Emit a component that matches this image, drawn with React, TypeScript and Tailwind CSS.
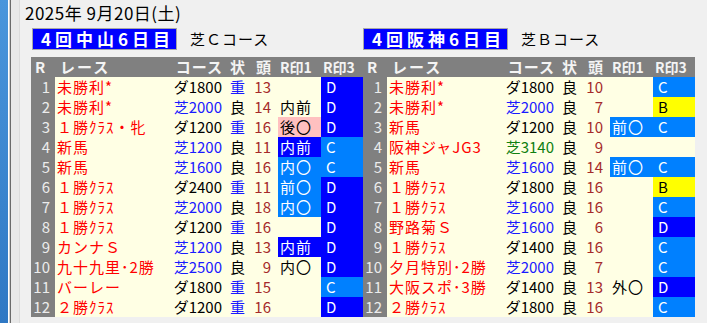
import React from "react"

type Mark = { t: string; c: "blue" | "sky" | "pink" | "yellow" | "plain" } | null

type Row = {
  race: string
  course: string
  courseColor: "dirt" | "turf" | "jump"
  cond: "重" | "良"
  heads: number
  m1: Mark
  m3: Mark
}

const markBg: Record<string, string> = {
  blue: "bg-[#0000ff] text-white",
  sky: "bg-[#0080ff] text-white",
  pink: "bg-[#ffc0c0] text-black",
  yellow: "bg-[#ffff00] text-black",
  plain: "text-black",
}

const courseText: Record<string, string> = {
  dirt: "text-black",
  turf: "text-[#1a1aff]",
  jump: "text-[#108010]",
}

const D: Mark = { t: "D", c: "blue" }
const C: Mark = { t: "C", c: "sky" }
const B: Mark = { t: "B", c: "yellow" }

const nakayama: Row[] = [
  { race: "未勝利*", course: "ダ1800", courseColor: "dirt", cond: "重", heads: 13, m1: null, m3: D },
  { race: "未勝利*", course: "芝2000", courseColor: "turf", cond: "良", heads: 14, m1: { t: "内前", c: "plain" }, m3: D },
  { race: "１勝ｸﾗｽ・牝", course: "ダ1200", courseColor: "dirt", cond: "重", heads: 16, m1: { t: "後〇", c: "pink" }, m3: D },
  { race: "新馬", course: "芝1200", courseColor: "turf", cond: "良", heads: 11, m1: { t: "内前", c: "blue" }, m3: C },
  { race: "新馬", course: "芝1600", courseColor: "turf", cond: "良", heads: 16, m1: { t: "内〇", c: "sky" }, m3: C },
  { race: "１勝ｸﾗｽ", course: "ダ2400", courseColor: "dirt", cond: "重", heads: 11, m1: { t: "前〇", c: "sky" }, m3: D },
  { race: "１勝ｸﾗｽ", course: "芝2000", courseColor: "turf", cond: "良", heads: 18, m1: { t: "内〇", c: "sky" }, m3: D },
  { race: "１勝ｸﾗｽ", course: "ダ1200", courseColor: "dirt", cond: "重", heads: 16, m1: null, m3: D },
  { race: "カンナＳ", course: "芝1200", courseColor: "turf", cond: "良", heads: 13, m1: { t: "内前", c: "blue" }, m3: D },
  { race: "九十九里･2勝", course: "芝2500", courseColor: "turf", cond: "良", heads: 9, m1: { t: "内〇", c: "plain" }, m3: D },
  { race: "バーレー", course: "ダ1800", courseColor: "dirt", cond: "重", heads: 15, m1: null, m3: C },
  { race: "２勝ｸﾗｽ", course: "ダ1200", courseColor: "dirt", cond: "重", heads: 16, m1: null, m3: D },
]

const hanshin: Row[] = [
  { race: "未勝利*", course: "ダ1800", courseColor: "dirt", cond: "良", heads: 10, m1: null, m3: C },
  { race: "未勝利*", course: "芝2000", courseColor: "turf", cond: "良", heads: 7, m1: null, m3: B },
  { race: "新馬", course: "ダ1200", courseColor: "dirt", cond: "良", heads: 10, m1: { t: "前〇", c: "sky" }, m3: C },
  { race: "阪神ジャJG3", course: "芝3140", courseColor: "jump", cond: "良", heads: 9, m1: null, m3: null },
  { race: "新馬", course: "芝1600", courseColor: "turf", cond: "良", heads: 14, m1: { t: "前〇", c: "sky" }, m3: C },
  { race: "１勝ｸﾗｽ", course: "ダ1800", courseColor: "dirt", cond: "良", heads: 16, m1: null, m3: B },
  { race: "１勝ｸﾗｽ", course: "芝1600", courseColor: "turf", cond: "良", heads: 16, m1: null, m3: C },
  { race: "野路菊Ｓ", course: "芝1600", courseColor: "turf", cond: "良", heads: 6, m1: null, m3: D },
  { race: "１勝ｸﾗｽ", course: "ダ1400", courseColor: "dirt", cond: "良", heads: 16, m1: null, m3: C },
  { race: "夕月特別･2勝", course: "芝2000", courseColor: "turf", cond: "良", heads: 7, m1: null, m3: C },
  { race: "大阪スポ･3勝", course: "ダ1400", courseColor: "dirt", cond: "良", heads: 13, m1: { t: "外〇", c: "plain" }, m3: D },
  { race: "２勝ｸﾗｽ", course: "ダ1800", courseColor: "dirt", cond: "良", heads: 16, m1: null, m3: C },
]

const cols = "grid grid-cols-[24px_110px_60px_25px_28px_43px_42px]"

function RaceTable({ rows }: { rows: Row[] }) {
  return (
    <div className="w-[332px] text-[15px] leading-[20px]">
      <div className={`${cols} h-[20px] bg-[#808080] font-bold text-[#f4f4f4]`}>
        <span className="pl-[4px]">R</span>
        <span className="pl-[5px] tracking-[2px]">レース</span>
        <span className="pr-[2px] text-right tracking-[1px]">コース</span>
        <span className="pl-[5px]">状</span>
        <span className="pr-[7px] text-right">頭</span>
        <span className="pl-[2px] text-[14px]">R印1</span>
        <span className="pl-[2px] text-[14px]">R印3</span>
      </div>
      {rows.map((r, i) => (
        <div key={i} className={`${cols} h-[20px] bg-[#ffffe4]`}>
          <span className="bg-[#808080] pr-[5px] text-right text-[#ececec]">{i + 1}</span>
          <span className="whitespace-nowrap pl-[2px] tracking-[1px] text-[#ff0000]">{r.race}</span>
          <span className={`pr-[3px] text-right ${courseText[r.courseColor]}`}>{r.course}</span>
          <span className={`pl-[5px] ${r.cond === "重" ? "text-[#1a1aff]" : "text-black"}`}>{r.cond}</span>
          <span className="pr-[7px] text-right text-[#a52a2a]">{r.heads}</span>
          <span className={`pl-[2px] tracking-[1px] ${r.m1 ? markBg[r.m1.c] : ""}`}>{r.m1?.t}</span>
          <span className={`pl-[5px] ${r.m3 ? markBg[r.m3.c] : ""}`}>{r.m3?.t}</span>
        </div>
      ))}
    </div>
  )
}

function MeetingLabel({ title, course }: { title: string; course: string }) {
  return (
    <div className="flex h-[22px] items-center">
      <div className="flex h-[22px] w-[145px] items-center border border-[#a8a8a8] bg-[#0000ff] pl-[8px] text-[17px] font-bold tracking-[4px] text-white">
        {title}
      </div>
      <span className="ml-[13px] text-[15px] tracking-[1px] text-black">{course}</span>
    </div>
  )
}

export default function App() {
  return (
    <div
      className="flex h-[323px] w-[707px] overflow-hidden bg-[#f0f0f0]"
      style={{ fontFamily: '"Noto Sans CJK JP", "Noto Sans", sans-serif' }}
    >
      <div className="w-[8px] bg-gradient-to-b from-[#4a96dc] to-[#2f78c4]" />
      <div className="w-[1px] bg-white" />
      <div className="w-[1px] bg-[#d0d0d0]" />
      <div className="w-[1px] bg-[#6b6b6b]" />
      <div className="w-[8px] bg-[#e9e9e9]" />
      <div className="w-[1px] bg-[#dcdcdc]" />
      <div className="flex flex-1 flex-col pl-[5px]">
        <div className="h-[28px]">
          <p className="text-[17px] leading-[25px] tracking-[0.5px] whitespace-nowrap text-black">2025年 9月20日(土)</p>
        </div>
        <div className="flex pl-[6px]">
          <div className="w-[332px] pl-[1px]">
            <MeetingLabel title="4回中山6日目" course="芝Ｃコース" />
          </div>
          <div className="w-[332px]">
            <MeetingLabel title="4回阪神6日目" course="芝Ｂコース" />
          </div>
        </div>
        <div className="mt-[7px] flex pl-[6px]">
          <RaceTable rows={nakayama} />
          <RaceTable rows={hanshin} />
        </div>
      </div>
    </div>
  )
}
